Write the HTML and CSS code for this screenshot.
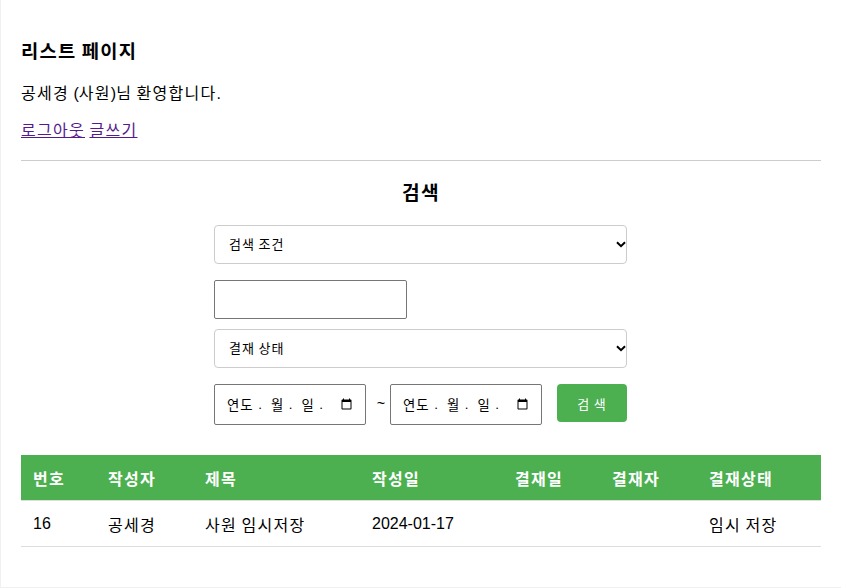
FILE: index.html
```html
<!DOCTYPE html>
<html lang="ko">
<head>
<meta charset="utf-8">
<title>리스트 페이지</title>
<link rel="stylesheet" href="styles.css">
</head>
<body>
<main class="page">
  <h1 class="title">리스트 페이지</h1>
  <p class="welcome">공세경 <span class="latin">(</span>사원<span class="latin">)</span>님 환영합니다<span class="latin">.</span></p>
  <p class="links"><a href="#a">로그아웃</a> <a href="#b">글쓰기</a></p>
  <hr class="rule">
  <h2 class="search-title">검색</h2>
  <form class="search">
    <select class="field"><option>검색 조건</option></select>
    <input class="text-input" type="text">
    <select class="field"><option>결재 상태</option></select>
    <div class="date-row">
      <div class="date-wrap">
        <input class="date" type="date">
        <div class="date-mask"><span class="seg">연도</span><span class="dot">.</span><span class="seg">월</span><span class="dot">.</span><span class="seg">일</span><span class="dot">.</span></div>
      </div>
      <span class="tilde">~</span>
      <div class="date-wrap">
        <input class="date" type="date">
        <div class="date-mask"><span class="seg">연도</span><span class="dot">.</span><span class="seg">월</span><span class="dot">.</span><span class="seg">일</span><span class="dot">.</span></div>
      </div>
      <button class="submit" type="button">검 색</button>
    </div>
  </form>
  <table class="list">
    <thead>
      <tr><th class="c1">번호</th><th class="c2">작성자</th><th class="c3">제목</th><th class="c4">작성일</th><th class="c5">결재일</th><th class="c6">결재자</th><th>결재상태</th></tr>
    </thead>
    <tbody>
      <tr><td class="latin">16</td><td>공세경</td><td>사원 임시저장</td><td class="latin">2024-01-17</td><td></td><td></td><td>임시 저장</td></tr>
    </tbody>
  </table>
</main>
</body>
</html>
```
FILE: styles.css
```css
html, body { margin: 0; height: 100%; }
body {
  background: #f0f0f0;
  font-family: "Liberation Sans", "Noto Sans CJK KR", sans-serif;
  font-size: 16px;
  letter-spacing: .08em;
  word-spacing: -.08em;
  color: #000;
  overflow: hidden;
}
.latin { letter-spacing: 0; word-spacing: 0; }
.page {
  background: #fff;
  margin-left: 1px;
  height: 587px;
  box-sizing: border-box;
  padding: 20px 20px 0;
}
.title { font-size: 18.72px; line-height: 22px; margin: 0; padding-top: 21px; font-weight: 700; }
.welcome { margin: 22px 0 0; line-height: 18px; }
.links { margin: 19px 0 0; line-height: 18px; }
.links a { color: #551a8b; }
.rule { border: 0; border-top: 1px solid #ccc; margin: 20px 0 0; }
.search-title { font-size: 19.2px; line-height: 22px; margin: 22px 0 0; text-align: center; }
.search { width: 413px; margin: 20px 194px 0 193px; }
.field {
  display: block;
  width: 100%;
  height: 39px;
  padding: 0 20px 0 14px;
  border: 1px solid #ccc;
  border-radius: 4px;
  appearance: none;
  background: #fff url("data:image/svg+xml,%3Csvg xmlns='http://www.w3.org/2000/svg' width='10' height='7' viewBox='0 0 10 7'%3E%3Cpath d='M1 1.2 5 5.2 9 1.2' fill='none' stroke='%23000' stroke-width='2'/%3E%3C/svg%3E") no-repeat right 0 center;
  font: 13px "Liberation Sans", "Noto Sans CJK KR", sans-serif;
  letter-spacing: .08em;
  word-spacing: -.08em;
  color: #000;
  box-sizing: border-box;
  margin-bottom: 16px;
}
.text-input {
  display: block;
  width: 193px;
  height: 39px;
  box-sizing: border-box;
  border: 1px solid #767676;
  border-radius: 2px;
  padding: 1px 2px;
  margin-bottom: 10px;
}
.date-row { display: flex; align-items: flex-start; }
.date-wrap { position: relative; width: 152px; height: 41px; }
.date {
  display: block;
  width: 152px;
  height: 41px;
  box-sizing: border-box;
  border: 1px solid #767676;
  border-radius: 2px;
  padding: 0 10px;
  font: 13.33px "Liberation Sans", "Noto Sans CJK KR", sans-serif;
  background: #fff;
  margin: 0;
}
.date::-webkit-datetime-edit { opacity: 0; }
.date-mask {
  position: absolute;
  left: 13px;
  top: 0;
  height: 41px;
  display: flex;
  align-items: center;
  font-size: 13.33px;
  pointer-events: none;
}
.seg { margin-right: 4.5px; letter-spacing: 0.08em; }
.dot { margin-right: 9px; letter-spacing: 0; }
.tilde { width: 24px; box-sizing: border-box; padding-left: 6px; text-align: center; font-size: 14.5px; line-height: 38px; letter-spacing: 0; }
.submit {
  width: 70px;
  height: 38px;
  margin-left: 15px;
  border: 0;
  border-radius: 4px;
  background: #4caf50;
  color: #fff;
  font: 13px "Liberation Sans", "Noto Sans CJK KR", sans-serif;
  letter-spacing: .08em;
  word-spacing: -.08em;
}
.list { width: 800px; margin-top: 30px; border-collapse: separate; border-spacing: 0; table-layout: fixed; }
.list th {
  background: #4caf50;
  background-clip: padding-box;
  color: #fff;
  text-align: left;
  font-weight: 700;
  font-size: 16px;
  height: 46px;
  padding: 0 12px;
  box-sizing: border-box;
  border-bottom: 1px solid #ddd;
}
.list td {
  height: 46px;
  padding: 0 12px;
  box-sizing: border-box;
  border-bottom: 1px solid #ddd;
}
.c1 { width: 75px; }
.c2 { width: 97px; }
.c3 { width: 167px; }
.c4 { width: 143px; }
.c5 { width: 97px; }
.c6 { width: 97px; }
```
